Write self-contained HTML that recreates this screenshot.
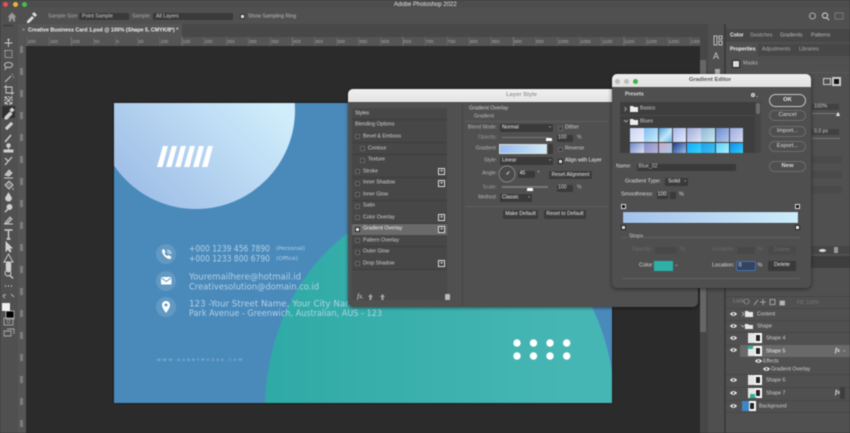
<!DOCTYPE html>
<html><head><meta charset="utf-8"><style>
html,body{margin:0;padding:0;background:#2b2b2b;overflow:hidden;width:850px;height:433px}
#r{position:relative;width:850px;height:433px;overflow:hidden;background:#2b2b2b;font-family:"Liberation Sans",sans-serif;filter:blur(.4px)}
.b{position:absolute}
.t{position:absolute;white-space:nowrap;line-height:1;transform:translateY(-50%);font-size:5.2px;color:#cfcfcf}
.r{transform:translate(-100%,-50%);color:#b5b5b5}
.w{color:#f2f2f2}
.d{color:#777}
.s{position:absolute;background:#3a3a3a;border-radius:1px}
.c{position:absolute;width:5px;height:5px;background:#3f3f3f;border:.5px solid #666;box-sizing:border-box}
.p{position:absolute;width:7px;height:7px;background:#3a3a3a;border:.5px solid #ddd;box-sizing:border-box;color:#eee;font-size:7px;line-height:5.5px;text-align:center}
.btn{position:absolute;background:#3c3c3c;color:#e6e6e6;font-size:5.2px;text-align:center;border-radius:1px}
.pill{position:absolute;border:1px solid #6c6c6c;border-radius:7px;box-sizing:border-box;color:#ddd;font-size:5.8px;text-align:center;left:769px;width:37px}
.row{position:absolute;left:352px;width:95px;height:11px;background:#474747;border-bottom:.5px solid #3c3c3c}
.sw{position:absolute;width:13.6px}
.lr{position:absolute;left:726px;width:124px;height:.5px;background:#474747}
.th{position:absolute;width:14px;height:10px;background:#fff;overflow:hidden}
.th:after{content:"";position:absolute;left:7px;top:1px;width:6px;height:8px;background:#222;border:1px solid #fff;box-sizing:border-box}
.th i{position:absolute;left:0;top:0;width:7px;height:10px;background:repeating-conic-gradient(#ccc 0 25%,#fff 0 50%) 0 0/3px 3px}
</style></head><body><div id="r">
<!-- chrome -->
<div class="b" style="left:0;top:0;width:850px;height:8px;background:#4d4d4d"></div>
<div class="b" style="left:0;top:8px;width:850px;height:16px;background:#505050"></div>
<div class="b" style="left:0;top:24px;width:726px;height:13px;background:#484848"></div>
<div class="b" style="left:18px;top:24px;width:164px;height:13px;background:#565656"></div>
<div class="b" style="left:18px;top:37px;width:682px;height:9px;background:#555"></div>
<div class="b" style="left:0;top:24px;width:18px;height:409px;background:#505050"></div>
<div class="b" style="left:18px;top:46px;width:8px;height:387px;background:#555"></div>
<div class="b" style="left:700px;top:37px;width:8px;height:396px;background:#474747"></div>
<div class="b" style="left:700px;top:60px;width:6px;height:272px;background:#666"></div>
<div class="b" style="left:708px;top:24px;width:18px;height:409px;background:#4f4f4f"></div>
<div class="b" style="left:724px;top:24px;width:2px;height:409px;background:#3c3c3c"></div>
<div class="b" style="left:726px;top:24px;width:124px;height:409px;background:#505050"></div>
<div class="b" style="left:726px;top:29px;width:124px;height:13px;background:#474747"></div>
<div class="b" style="left:726px;top:44px;width:124px;height:12px;background:#474747"></div>
<div class="b" style="left:726px;top:44px;width:32px;height:12px;background:#505050"></div>

<!-- traffic lights -->
<div class="b" style="left:3px;top:1.5px;width:5px;height:5px;border-radius:50%;background:#e8505b"></div>
<div class="b" style="left:12.5px;top:1.5px;width:5px;height:5px;border-radius:50%;background:#e8b43c"></div>
<div class="b" style="left:21.5px;top:1.5px;width:5px;height:5px;border-radius:50%;background:#4dbb50"></div>
<div class="t" style="left:394px;top:4.5px;font-size:6px;color:#e4e4e4">Adobe Photoshop 2022</div>

<!-- options -->
<svg class="b" style="left:0;top:8px" width="60" height="16"><path d="M7.500 9l4.500-4.500 4.500 4.500M9 9v4.500h2v-2.500h2v2.500h2V9" fill="#999"/><path d="M27 13l5-5 2 2-5 5-2 0zM32 6l2-2 3 3-2 2z" fill="#ddd"/></svg>
<div class="t" style="left:48px;top:16.5px;color:#aaa">Sample Size:</div>
<div class="s" style="left:79px;top:13px;width:50px;height:7px"></div>
<div class="t w" style="left:82px;top:16.5px;color:#ccc">Point Sample</div>
<div class="t" style="left:132px;top:16.5px;color:#aaa">Sample:</div>
<div class="s" style="left:153px;top:13px;width:80px;height:7px"></div>
<div class="t" style="left:156px;top:16.5px">All Layers</div>
<div class="c" style="left:240px;top:14px;background:#ddd;border:1.2px solid #333"></div>
<div class="t" style="left:248px;top:16.5px;color:#bbb">Show Sampling Ring</div>
<svg class="b" style="left:805px;top:10px" width="42" height="12"><circle cx="7.500" cy="6" r="3" fill="none" stroke="#aaa" stroke-width="1.100"/><circle cx="20" cy="5.500" r="2.600" fill="none" stroke="#ccc" stroke-width="1.100"/><path d="M22 8l2 2" stroke="#ccc" stroke-width="1.200"/><rect x="30" y="3" width="8" height="6" fill="none" stroke="#777"/></svg>

<!-- tab -->
<div class="t" style="left:22px;top:30.5px;color:#bbb">×</div>
<div class="t w" style="left:28px;top:30.5px;font-weight:bold;font-size:5.3px">Creative Business Card 1.psd @ 100% (Shape 5, CMYK/8*) *</div>

<!-- ruler -->
<div class="b" style="left:26px;top:37px;width:674px;height:9px;background:repeating-linear-gradient(90deg,#777 0 .6px,transparent .6px 22.1px) 1px 0"></div>
<div class="b" style="left:28px;top:38.5px;width:672px;display:flex;font-size:4.6px;color:#aaa;line-height:6px;overflow:hidden">
<span style="flex:0 0 22.1px">200</span><span style="flex:0 0 22.1px">150</span><span style="flex:0 0 22.1px">100</span><span style="flex:0 0 22.1px">50</span><span style="flex:0 0 22.1px">0</span><span style="flex:0 0 22.1px">50</span><span style="flex:0 0 22.1px">100</span><span style="flex:0 0 22.1px">150</span><span style="flex:0 0 22.1px">200</span><span style="flex:0 0 22.1px">250</span><span style="flex:0 0 22.1px">300</span><span style="flex:0 0 22.1px">350</span><span style="flex:0 0 22.1px">400</span><span style="flex:0 0 22.1px">450</span><span style="flex:0 0 22.1px">500</span><span style="flex:0 0 22.1px">550</span><span style="flex:0 0 22.1px">600</span><span style="flex:0 0 22.1px">650</span><span style="flex:0 0 22.1px">700</span><span style="flex:0 0 22.1px">750</span><span style="flex:0 0 22.1px">800</span><span style="flex:0 0 22.1px">850</span><span style="flex:0 0 22.1px">900</span><span style="flex:0 0 22.1px">950</span><span style="flex:0 0 22.1px">1000</span><span style="flex:0 0 22.1px">1050</span><span style="flex:0 0 22.1px">1100</span><span style="flex:0 0 22.1px">1150</span><span style="flex:0 0 22.1px">1200</span><span style="flex:0 0 22.1px">1250</span><span style="flex:0 0 22.1px">1300</span>
</div>
<div class="b" style="left:20px;top:46px;width:3px;height:387px;background:repeating-linear-gradient(180deg,#7c7c7c 0 7px,transparent 7px 22px)"></div>

<!-- toolbar -->
<div class="b" style="left:2px;top:106px;width:13px;height:12px;background:#2f2f2f"></div>
<svg class="b" style="left:0;top:30px" width="18" height="320" fill="none" stroke="#d0d0d0" stroke-width=".9">
<path d="M8.500 9v8M4.500 13h8M8.500 9l-1 1M8.500 9l1 1"/>
<rect x="5" y="20.500" width="7" height="7" stroke-dasharray="1.200 1"/>
<ellipse cx="8.500" cy="35" rx="4" ry="2.600"/><path d="M6 37l-1 3"/>
<path d="M5 52l6-6M12 44l.5 1M13 47l1 .3"/>
<path d="M6 55v8h8M4 57h8v8"/>
<rect x="5" y="67" width="7" height="7" stroke-dasharray="2 1"/><path d="M5 67l7 7M12 67l-7 7"/>
<path d="M5 87l5-5 2 2-5 5h-2zM10 80l2-2 2 2-2 2z" fill="#d0d0d0"/>
<path d="M5 98l6-6 2 2-6 6z" fill="#d0d0d0" stroke-width=".5"/>
<path d="M5 112l6-7" stroke-width="1.500"/>
<path d="M4 122h9v-2h-9zM8.500 120v-3" fill="#d0d0d0"/><circle cx="8.500" cy="115.500" r="1.800" fill="#d0d0d0"/>
<path d="M5 135l7-8M5 128l3 3" stroke-width="1.200"/>
<path d="M5 145l4-5 3 3-3 3zM4 148h9" fill="#bbb"/>
<path d="M5 155l4-4 4 4-4 4zM13 158v2" fill="#777"/>
<path d="M8.500 163l3 5a3 3 0 1 1-6 0z" fill="#d0d0d0"/>
<circle cx="9.500" cy="177" r="2.500" fill="#d0d0d0"/><path d="M8 179l-3 3" stroke-width="1.400"/>
<path d="M5 193l5-6 2 2-5 5zM4 194h9" fill="#888"/>
<path d="M4.500 200h8M8.500 200v9M6.500 209h4" stroke-width="1.400"/>
<path d="M6 212l0 9 2-2 2 3 1-1-2-3h3z" fill="#d0d0d0"/>
<path d="M8.500 224l4.500 8h-9z"/>
<path d="M6 242v-6h1v4-5h1.500v5-5H10v5-4h1v7l-1 2H7z" fill="#d0d0d0" transform="translate(0,-3)" stroke-width=".4"/>
<circle cx="8" cy="243" r="3"/><path d="M10 245.500l3 3" stroke-width="1.400"/>
<path d="M5 256h1M8 256h1M11 256h1" stroke-width="1.400"/>
<path d="M3 266a2 2 0 0 1 3-1M11 264l3 3M5 268l-2-2" stroke-width=".8"/>
<rect x="6" y="281" width="8" height="8" fill="#000" stroke="#eee" stroke-width=".6"/>
<rect x="2" y="273" width="8" height="8" fill="#f0f0f0" stroke="none"/>
<rect x="4" y="288" width="9" height="7" stroke="#aaa"/><circle cx="8.500" cy="291.500" r="1.500" stroke="#aaa" stroke-width=".6"/>
<path d="M4 301h7v5H4zM7 299h7v5" stroke="#aaa"/>
</svg>
<div class="b" style="left:3px;top:25px;width:10px;height:1px;background:#333"></div>

<!-- card -->
<div class="b" style="left:114px;top:103px;width:498px;height:300px;background:#4a8abb;box-shadow:0 0 2px #111"></div>
<div class="b" style="left:114px;top:103px;width:181px;height:107px;background:linear-gradient(225deg,#d0edfb 8%,#a0c0e8 85%);clip-path:circle(99px at 82px 7px)"></div>
<div class="b" style="left:114px;top:103px;width:498px;height:300px;background:linear-gradient(90deg,#2faaa6 30%,#46b6b4 90%);clip-path:ellipse(175px 208px at 326px 307px)"></div>
<svg class="b" style="left:0;top:0" width="850" height="433">
<g fill="#fff"><polygon points="157,167 162.500,167 168,146 163,146"/><polygon points="166,167 171.500,167 177,146 172,146"/><polygon points="175,167 180.500,167 186,146 181,146"/><polygon points="184,167 189.500,167 195,146 190,146"/><polygon points="193,167 198.500,167 204,146 199,146"/><polygon points="202,167 207.500,167 213,146 208,146"/></g>
<g fill="#fff" fill-opacity=".13"><circle cx="166" cy="254" r="10"/><circle cx="166" cy="281" r="10"/><circle cx="166" cy="307" r="10"/></g>
<path d="M162 250l2-1 1.500 3-1 1c.5 1.500 1.500 2.500 3 3l1-1 3 2-1 2c-4 .5-9-5-8.500-9z" fill="#fff"/><path d="M167 250a4 4 0 0 1 4 4M167 252a2 2 0 0 1 2 2" stroke="#fff" stroke-width=".8" fill="none"/>
<rect x="161" y="277" width="10.500" height="7.500" rx="1" fill="#fff"/><path d="M161.500 278l4.800 3.500 4.800-3.500" stroke="#4a8abb" stroke-width=".8" fill="none"/>
<path d="M166 301a4 4 0 0 1 4 4c0 3-4 8-4 8s-4-5-4-8a4 4 0 0 1 4-4z" fill="#fff"/><circle cx="166" cy="305" r="1.500" fill="#5b96c2"/>
<g font-family="'DejaVu Sans','Liberation Sans',sans-serif" fill="#bcd7ec" fill-opacity=".9">
<text x="189" y="251.500" font-size="9" textLength="81" lengthAdjust="spacingAndGlyphs">+000 1239 456 7890</text>
<text x="189" y="261.500" font-size="9" textLength="81" lengthAdjust="spacingAndGlyphs">+000 1233 800 6790</text>
<text x="276" y="250" font-size="5" textLength="29" lengthAdjust="spacingAndGlyphs">(Personal)</text>
<text x="276" y="260" font-size="5" textLength="22" lengthAdjust="spacingAndGlyphs">(Office)</text>
<text x="189" y="279.500" font-size="9" textLength="112" lengthAdjust="spacingAndGlyphs">Youremailhere@hotmail.id</text>
<text x="189" y="289.500" font-size="9" textLength="130" lengthAdjust="spacingAndGlyphs">Creativesolution@domain.co.id</text>
<text x="189" y="306.500" font-size="9" textLength="170" lengthAdjust="spacingAndGlyphs">123 -Your Street Name, Your City Name</text>
<text x="189" y="316" font-size="9" textLength="193" lengthAdjust="spacingAndGlyphs">Park Avenue - Greenwich, Australian, AUS - 123</text>
<text x="157" y="361" font-size="3.800" textLength="85" fill="#a9cbe4">WWW.DANNYMOZAK.COM</text>
</g>
<g fill="#fff"><circle cx="517" cy="343" r="3.700"/><circle cx="533.500" cy="343" r="3.700"/><circle cx="550" cy="343" r="3.700"/><circle cx="566.700" cy="343" r="3.700"/><circle cx="517" cy="356" r="3.700"/><circle cx="533.500" cy="356" r="3.700"/><circle cx="550" cy="356" r="3.700"/><circle cx="566.700" cy="356" r="3.700"/></g>
</svg>

<!-- right panels -->
<div class="t w" style="left:730px;top:35.500px;font-weight:bold">Color</div>
<div class="t" style="left:750px;top:35.500px;color:#aaa">Swatches</div>
<div class="t" style="left:780px;top:35.500px;color:#bbb">Gradients</div>
<div class="t" style="left:811px;top:35.500px;color:#bbb">Patterns</div>
<div class="t w" style="left:730px;top:50px;font-weight:bold">Properties</div>
<div class="t" style="left:762px;top:50px;color:#aaa">Adjustments</div>
<div class="t" style="left:799px;top:50px;color:#aaa">Libraries</div>
<div class="b" style="left:732px;top:60px;width:8px;height:8px;background:#ddd;border:1.500px solid #222;box-sizing:border-box;border-radius:1px"></div>
<div class="t" style="left:743px;top:64px;color:#bbb">Masks</div>
<div class="b" style="left:726px;top:72px;width:124px;height:1px;background:#5a5a5a"></div>
<div class="b" style="left:823px;top:78px;width:8px;height:7px;border:1px solid #ccc;box-sizing:border-box"></div>
<div class="b" style="left:832px;top:77px;width:9px;height:9px;background:#111;border:2px solid #ccc;box-sizing:border-box"></div>
<div class="s" style="left:812px;top:104px;width:27px;height:6px;background:#414141"></div>
<div class="t" style="left:814px;top:107px;color:#ccc">100%</div>
<div class="b" style="left:812px;top:113px;width:28px;height:1px;background:#777"></div>
<div class="b" style="left:836px;top:110px;border:2.500px solid transparent;border-bottom:4px solid #eee"></div>
<div class="s" style="left:812px;top:129px;width:27px;height:6px;background:#414141"></div>
<div class="t" style="left:814px;top:132px;color:#ccc">0,0 px</div>
<div class="b" style="left:812px;top:138px;width:28px;height:1px;background:#777"></div>
<div class="s" style="left:812px;top:156px;width:30px;height:7px;background:#4a4a4a"></div>
<div class="s" style="left:812px;top:171px;width:30px;height:7px;background:#4a4a4a"></div>
<div class="s" style="left:812px;top:186px;width:30px;height:7px;background:#4a4a4a"></div>
<div class="b" style="left:811px;top:246px;width:39px;height:8px;background:#464646"></div>
<div class="b" style="left:819px;top:249px;width:7px;height:3px;background:#ddd;border-radius:50%"></div>
<div class="b" style="left:834px;top:247px;width:4px;height:6px;background:#999"></div>
<div class="b" style="left:811px;top:256px;width:39px;height:12px;background:#3e3e3e"></div>

<!-- layers -->
<div class="b" style="left:726px;top:296px;width:124px;height:1px;background:#454545"></div>
<div class="t d" style="left:733px;top:301.500px;color:#8c8c8c">Lock:</div>
<svg class="b" style="left:742px;top:297px" width="90" height="10" fill="none" stroke="#b5b5b5" stroke-width=".8"><circle cx="4.500" cy="4.500" r="2.500" stroke-dasharray="1 .8"/><path d="M12 8l4-5M21 2v6M18 5h6"/><rect x="28" y="2.500" width="5" height="5"/><rect x="38" y="4" width="4.500" height="4" fill="#b5b5b5"/><text x="55" y="7" font-size="5" fill="#777" stroke="none" font-family="Liberation Sans">Fill: 100%</text></svg>
<div class="lr" style="top:308px"></div><div class="lr" style="top:320px"></div><div class="lr" style="top:332px"></div><div class="lr" style="top:345px"></div><div class="lr" style="top:374px"></div><div class="lr" style="top:387px"></div><div class="lr" style="top:400px"></div><div class="lr" style="top:412px"></div>
<div class="b" style="left:740px;top:345px;width:110px;height:12px;background:#696969"></div>
<svg class="b" style="left:726px;top:305px" width="124" height="110" fill="#e8e8e8">
<g id="e"><path d="M4 9c2-2.500 5-2.500 7 0-2 2.500-5 2.500-7 0z"/><circle cx="7.500" cy="9" r="1" fill="#444"/></g>
<use href="#e" y="12"/><use href="#e" y="24"/><use href="#e" y="36"/><use href="#e" y="66"/><use href="#e" y="79"/><use href="#e" y="92"/>
<use href="#e" x="25" y="47" /><use href="#e" x="33" y="55"/>
<path d="M16 7l2 2-2 2" fill="none" stroke="#ccc" stroke-width=".7"/><path d="M15 20l2 2 2-2" fill="none" stroke="#ccc" stroke-width=".7"/>
<path d="M19 6h3l1 1h4v5h-8zM19 19h3l1 1h4v4h-8z"/>
</svg>
<div class="t" style="left:757px;top:314.500px">Content</div>
<div class="t" style="left:757px;top:326.500px">Shape</div>
<div class="th" style="left:748px;top:333px"><i></i></div><div class="t" style="left:766px;top:338.500px">Shape 4</div>
<div class="th" style="left:748px;top:346px"><i></i><i style="width:5px;height:3px;background:#2dae99;background-image:none"></i></div><div class="t w" style="left:766px;top:351.500px">Shape 5</div>
<div class="t w" style="left:835px;top:351px;font-style:italic;font-family:'Liberation Serif',serif;font-size:6px;font-weight:bold">fx</div>
<div class="t" style="left:842px;top:351px">⌄</div>
<div class="t" style="left:763px;top:361.500px">Effects</div>
<div class="t" style="left:771px;top:369.500px">Gradient Overlay</div>
<div class="th" style="left:748px;top:375px"><i></i></div><div class="t" style="left:766px;top:380.500px">Shape 6</div>
<div class="th" style="left:748px;top:388px"><i></i><i style="left:2px;top:6px;width:6px;height:4px;background:#2dae99;background-image:none"></i></div><div class="t" style="left:766px;top:393.500px">Shape 7</div>
<div class="t w" style="left:835px;top:393px;font-style:italic;font-family:'Liberation Serif',serif;font-size:6px;font-weight:bold">fx</div>
<div class="b" style="left:840px;top:387px;width:5px;height:12px;background:#3d3d3d"></div>
<div class="th" style="left:742px;top:401px"><i style="background:#3f87c4"></i></div><div class="t" style="left:759px;top:406.500px">Background</div>
<svg class="b" style="left:712px;top:33px" width="12" height="48" fill="none" stroke="#bbb"><path d="M2 3h3v9H2zM7 3h3v3H7zM7 8h3v4H7z"/><text x="1" y="26" font-size="9" fill="#ccc" stroke="none" font-family="Liberation Sans">A</text><rect x="3" y="36" width="5" height="5" fill="#aaa" stroke="none"/></svg>

<!-- Layer Style dialog -->
<div class="b" style="left:348px;top:89px;width:350px;height:218px;background:#505050;border-radius:5px;box-shadow:0 1px 3px rgba(0,0,0,.5);overflow:hidden">
  <div class="b" style="left:0;top:0;width:100%;height:13px;background:linear-gradient(#f0f0f0,#e4e4e4)"></div>
</div>
<div class="t" style="left:506px;top:95.500px;color:#999;font-weight:bold;font-size:5.800px">Layer Style</div>
<div class="b" style="left:352px;top:108px;width:95px;height:192px;background:#4a4a4a"></div>
<div class="b" style="left:462px;top:103px;width:.7px;height:203px;background:#444"></div>
<div class="row" style="top:108px"></div><div class="row" style="top:119.500px"></div><div class="row" style="top:131px"></div><div class="row" style="top:143px"></div><div class="row" style="top:154.500px"></div><div class="row" style="top:166px"></div><div class="row" style="top:177.500px"></div><div class="row" style="top:189px"></div><div class="row" style="top:200.500px"></div><div class="row" style="top:212px"></div>
<div class="row" style="top:223.500px;background:#6a6a6a"></div>
<div class="row" style="top:235px"></div><div class="row" style="top:246.500px"></div><div class="row" style="top:258px"></div>
<div class="t w" style="left:355px;top:113.500px;color:#ddd">Styles</div>
<div class="t" style="left:355px;top:125px">Blending Options</div>
<div class="c" style="left:355px;top:134px"></div><div class="t" style="left:363px;top:137px">Bevel &amp; Emboss</div>
<div class="c" style="left:359.500px;top:146px"></div><div class="t" style="left:368px;top:148.500px">Contour</div>
<div class="c" style="left:359.500px;top:157.500px"></div><div class="t" style="left:368px;top:160px">Texture</div>
<div class="c" style="left:355px;top:169px"></div><div class="t" style="left:363px;top:171.500px">Stroke</div><div class="p" style="left:438px;top:168px">+</div>
<div class="c" style="left:355px;top:180.500px"></div><div class="t" style="left:363px;top:183px">Inner Shadow</div><div class="p" style="left:438px;top:179.500px">+</div>
<div class="c" style="left:355px;top:192px"></div><div class="t" style="left:363px;top:194.500px">Inner Glow</div>
<div class="c" style="left:355px;top:203.500px"></div><div class="t" style="left:363px;top:206px">Satin</div>
<div class="c" style="left:355px;top:215px"></div><div class="t" style="left:363px;top:217.500px">Color Overlay</div><div class="p" style="left:438px;top:214px">+</div>
<div class="c" style="left:355px;top:226.500px;background:#eee;border:1.200px solid #222"></div><div class="t w" style="left:363px;top:229px">Gradient Overlay</div><div class="p" style="left:438px;top:225.500px">+</div>
<div class="c" style="left:355px;top:238px"></div><div class="t" style="left:363px;top:240.500px">Pattern Overlay</div>
<div class="c" style="left:355px;top:249.500px"></div><div class="t" style="left:363px;top:252px">Outer Glow</div>
<div class="c" style="left:355px;top:261px"></div><div class="t" style="left:363px;top:263.500px">Drop Shadow</div><div class="p" style="left:438px;top:260px">+</div>
<div class="t" style="left:357px;top:297px;font-family:'Liberation Serif',serif;font-style:italic;font-size:7px;color:#ddd">fx.</div>
<svg class="b" style="left:366px;top:293px" width="20" height="8" fill="#a5a5a5"><path d="M4.500 1l2.500 3H5.500v3h-2V4H2zM16.500 1l2.500 3h-1.500v3h-2V4H14z"/></svg>
<div class="b" style="left:445px;top:294px;width:4.500px;height:6px;background:#bbb;border-radius:1px"></div>

<div class="t" style="left:469px;top:109px">Gradient Overlay</div>
<div class="t" style="left:474px;top:117px;color:#bbb">Gradient</div>
<div class="b" style="left:465px;top:121px;width:143px;height:.6px;background:#5e5e5e"></div>
<div class="b" style="left:465px;top:206px;width:143px;height:.6px;background:#5e5e5e"></div>
<div class="t r" style="left:497px;top:128px">Blend Mode:</div>
<div class="s" style="left:500px;top:124px;width:53px;height:8px"></div><div class="t" style="left:502px;top:128px;color:#eee">Normal</div><div class="t" style="left:548px;top:127px;font-size:5px">⌄</div>
<div class="c" style="left:558px;top:126px"></div><div class="t" style="left:565px;top:128px">Dither</div>
<div class="t r" style="left:497px;top:138px;color:#999">Opacity:</div>
<div class="b" style="left:502px;top:136.500px;width:46px;height:1.500px;background:#777"></div>
<div class="b" style="left:545.500px;top:138px;width:6px;height:3px;background:#fff;border-radius:1px 1px 0 0"></div>
<div class="s" style="left:557px;top:134.500px;width:16px;height:7px"></div><div class="t" style="left:558px;top:138px;color:#ddd">100</div><div class="t" style="left:577px;top:138px;color:#bbb">%</div>
<div class="t r" style="left:497px;top:149px">Gradient:</div>
<div class="b" style="left:499px;top:144px;width:48px;height:10px;background:linear-gradient(90deg,#97bcee,#cfe9f8);border:.7px solid #ddd;box-sizing:border-box"></div>
<div class="s" style="left:548px;top:144px;width:5px;height:10px"></div>
<div class="c" style="left:558px;top:146.500px"></div><div class="t" style="left:565px;top:149px">Reverse</div>
<div class="t r" style="left:497px;top:161px">Style:</div>
<div class="s" style="left:500px;top:157px;width:53px;height:8px"></div><div class="t" style="left:502px;top:161px;color:#eee">Linear</div><div class="t" style="left:548px;top:160px;font-size:5px">⌄</div>
<div class="c" style="left:558px;top:158.500px;background:#ddd;border:1.200px solid #222"></div><div class="t w" style="left:565px;top:161px">Align with Layer</div>
<div class="t r" style="left:497px;top:174px">Angle:</div>
<svg class="b" style="left:498px;top:165px" width="18" height="18"><circle cx="9" cy="9" r="8" fill="#4a4a4a" stroke="#999" stroke-width=".7"/><path d="M9 9l2.500-2.500" stroke="#eee" stroke-width=".7"/><circle cx="9" cy="9" r=".6" fill="#eee"/></svg>
<div class="s" style="left:518px;top:170.500px;width:17px;height:7px"></div><div class="t" style="left:519.500px;top:174px;color:#eee">45</div><div class="t" style="left:537.500px;top:174px">°</div>
<div class="btn" style="left:549px;top:171px;width:43px;height:8px;line-height:8px">Reset Alignment</div>
<div class="t r" style="left:497px;top:188px;color:#999">Scale:</div>
<div class="b" style="left:502px;top:186px;width:46px;height:1.500px;background:#777"></div>
<div class="b" style="left:527px;top:187.500px;width:6px;height:3px;background:#fff;border-radius:1px 1px 0 0"></div>
<div class="s" style="left:557px;top:184.500px;width:16px;height:7px"></div><div class="t" style="left:558px;top:188px;color:#ddd">100</div><div class="t" style="left:577px;top:188px;color:#bbb">%</div>
<div class="t r" style="left:497px;top:198px">Method:</div>
<div class="s" style="left:500px;top:194px;width:32px;height:8px"></div><div class="t" style="left:502px;top:198px;color:#eee">Classic</div><div class="t" style="left:527px;top:197px;font-size:5px">⌄</div>
<div class="btn" style="left:503px;top:210px;width:35px;height:8.500px;line-height:8.500px">Make Default</div>
<div class="btn" style="left:544px;top:210px;width:42px;height:8.500px;line-height:8.500px">Reset to Default</div>

<!-- Gradient Editor -->
<div class="b" style="left:612px;top:74px;width:199px;height:214px;background:#4f4f4f;border-radius:5px;box-shadow:0 1px 4px rgba(0,0,0,.5);overflow:hidden">
  <div class="b" style="left:0;top:0;width:100%;height:13px;background:linear-gradient(#eee,#e0e0e0)"></div>
</div>
<div class="b" style="left:615px;top:78.500px;width:5px;height:5px;border-radius:50%;background:#bbb"></div>
<div class="b" style="left:624px;top:78.500px;width:5px;height:5px;border-radius:50%;background:#bbb"></div>
<div class="b" style="left:633px;top:78.500px;width:5px;height:5px;border-radius:50%;background:#3cb44a"></div>
<div class="t" style="left:689px;top:80.500px;color:#555;font-weight:bold;font-size:5.800px">Gradient Editor</div>
<div class="t" style="left:625px;top:94.500px;font-weight:bold;color:#ddd">Presets</div>
<svg class="b" style="left:750px;top:92px" width="10" height="6"><circle cx="3" cy="3" r="2" fill="#ddd"/><circle cx="3" cy="3" r=".7" fill="#4f4f4f"/><circle cx="7" cy="4.500" r=".5" fill="#ddd"/></svg>
<div class="b" style="left:620px;top:102px;width:141px;height:51px;background:#3e3e3e"></div>
<div class="b" style="left:620px;top:115px;width:141px;height:.6px;background:#4a4a4a"></div>
<div class="b" style="left:755px;top:102px;width:6px;height:51px;background:#464646"></div>
<div class="b" style="left:755.500px;top:103px;width:4px;height:11px;background:#6d6d6d;border-radius:2px"></div>
<svg class="b" style="left:622px;top:105px" width="28" height="20" fill="#eee"><path d="M2.500 2l2 2-2 2M2 15l2 2 2-2" fill="none" stroke="#ccc" stroke-width=".7"/><path d="M8 1h3l1 1h4v5H8zM8 14h3l1 1h4v5H8z"/></svg>
<div class="t" style="left:640px;top:108.500px;color:#ccc">Basics</div>
<div class="t" style="left:640px;top:121.500px;color:#ccc">Blues</div>
<div class="b" style="left:630px;top:128px;width:114px;height:25px;overflow:hidden">
<div class="sw" style="left:0;top:0;height:14px;background:linear-gradient(135deg,#c8d4f4,#eef0fc)"></div>
<div class="sw" style="left:14.250px;top:0;height:14px;background:linear-gradient(135deg,#7dbcf4,#c9f0fb)"></div>
<div class="sw" style="left:28.500px;top:0;height:14px;background:linear-gradient(135deg,#4e9fe0,#c3e6f8 55%,#6fb8e8)"></div>
<div class="sw" style="left:42.750px;top:0;height:14px;background:linear-gradient(135deg,#a9b8ee,#e3e9fa)"></div>
<div class="sw" style="left:57px;top:0;height:14px;background:linear-gradient(135deg,#9ea9da,#dfe6f2)"></div>
<div class="sw" style="left:71.250px;top:0;height:14px;background:linear-gradient(135deg,#8fb3d8,#c9ecec)"></div>
<div class="sw" style="left:85.500px;top:0;height:14px;background:linear-gradient(135deg,#6a8cd0,#b5c8ec)"></div>
<div class="sw" style="left:99.750px;top:0;height:14px;background:linear-gradient(135deg,#9aaee0,#d4d8ee)"></div>
<div class="sw" style="left:0;top:15px;height:10px;background:linear-gradient(135deg,#6c86c8,#dfe4f2)"></div>
<div class="sw" style="left:14.250px;top:15px;height:10px;background:linear-gradient(135deg,#8a8cc4,#b5b8dc)"></div>
<div class="sw" style="left:28.500px;top:15px;height:10px;background:linear-gradient(135deg,#c8a8c8,#a8cce8)"></div>
<div class="sw" style="left:42.750px;top:15px;height:10px;background:linear-gradient(135deg,#1c3c8c,#9cc0ea)"></div>
<div class="sw" style="left:57px;top:15px;height:10px;background:linear-gradient(135deg,#16a8f4,#34d4fa)"></div>
<div class="sw" style="left:71.250px;top:15px;height:10px;background:linear-gradient(135deg,#1ea0e8,#3cc0f0)"></div>
<div class="sw" style="left:85.500px;top:15px;height:10px;background:linear-gradient(135deg,#5cd0fa,#a8f0fc)"></div>
<div class="sw" style="left:99.750px;top:15px;height:10px;background:linear-gradient(135deg,#0e8cf0,#30ccf8)"></div>
</div>
<div class="pill" style="top:94px;height:12.500px;line-height:10.500px;border-color:#c5c5c5;color:#eee;font-weight:bold">OK</div>
<div class="pill" style="top:110px;height:11px;line-height:9px">Cancel</div>
<div class="pill" style="top:126px;height:11px;line-height:9px">Import...</div>
<div class="pill" style="top:141px;height:11px;line-height:9px">Export...</div>
<div class="pill" style="top:161px;height:11px;line-height:9px;font-weight:bold">New</div>
<div class="t" style="left:616px;top:167px;color:#ddd">Name:</div>
<div class="s" style="left:637px;top:164px;width:99px;height:6.500px"></div><div class="t" style="left:638.500px;top:167.300px;color:#ccc">Blue_02</div>
<div class="t" style="left:625px;top:181.500px;color:#ddd;font-size:5.500px">Gradient Type:</div>
<div class="s" style="left:665px;top:178px;width:23px;height:7.500px"></div><div class="t" style="left:668px;top:181.500px;color:#eee;font-size:5.500px">Solid</div><div class="t" style="left:683px;top:181px;font-size:5px">⌄</div>
<div class="t" style="left:621px;top:195px;color:#ddd;font-size:5.500px">Smoothness:</div>
<div class="s" style="left:657px;top:191.500px;width:11px;height:7px"></div><div class="t" style="left:657.500px;top:195px;color:#eee;font-size:5.500px">100</div>
<div class="s" style="left:670px;top:191.500px;width:6px;height:7px"></div><div class="t" style="left:679px;top:195px;color:#ddd;font-size:5.500px">%</div>
<div class="b" style="left:621px;top:203.500px;width:5px;height:5px;background:#111;border:1px solid #ddd;box-sizing:border-box"></div>
<div class="b" style="left:795px;top:203.500px;width:5px;height:5px;background:#111;border:1px solid #ddd;box-sizing:border-box"></div>
<div class="b" style="left:623px;top:212px;width:175px;height:11px;background:linear-gradient(90deg,#a3c2ea,#cdecf9);box-shadow:0 0 0 .5px #333"></div>
<div class="b" style="left:621px;top:225px;width:4.500px;height:5px;background:#ddd;border:.7px solid #222;box-sizing:border-box"></div>
<div class="b" style="left:795px;top:225px;width:4.500px;height:5px;background:#eee;border:.7px solid #222;box-sizing:border-box"></div>
<div class="t" style="left:629px;top:237px;color:#ccc;font-size:5.500px">Stops</div>
<div class="b" style="left:622px;top:237px;width:5px;height:.6px;background:#626262"></div>
<div class="b" style="left:642px;top:237px;width:158px;height:.6px;background:#626262"></div>
<div class="b" style="left:622px;top:278px;width:178px;height:.6px;background:#626262"></div>
<div class="t" style="left:632px;top:250px;color:#6d6d6d;font-size:5.500px">Opacity:</div>
<div class="s" style="left:655px;top:246.500px;width:22px;height:7px;background:#484848"></div><div class="t" style="left:680px;top:250px;color:#6d6d6d;font-size:5.500px">%</div>
<div class="t" style="left:712px;top:250px;color:#6d6d6d;font-size:5.500px">Location:</div>
<div class="s" style="left:737px;top:246.500px;width:18px;height:7px;background:#484848"></div><div class="t" style="left:757.500px;top:250px;color:#6d6d6d;font-size:5.500px">%</div>
<div class="btn" style="left:768px;top:246px;width:28px;height:9px;line-height:9px;background:#4a4a4a;color:#6d6d6d;font-size:5.500px">Delete</div>
<div class="t" style="left:639px;top:265.500px;color:#ddd;font-size:5.500px">Color:</div>
<div class="b" style="left:654px;top:261px;width:19px;height:9.500px;background:#2eb0a8"></div><div class="t" style="left:675px;top:265.500px;font-size:5px">–</div>
<div class="t" style="left:712px;top:265.500px;color:#ddd;font-size:5.500px">Location:</div>
<div class="b" style="left:737px;top:262px;width:18px;height:7.500px;background:#34445c;box-shadow:0 0 0 1px #3f6fb5;border-radius:1px"></div><div class="t w" style="left:738.500px;top:265.800px;font-size:5.500px">0</div><div class="t" style="left:757.500px;top:265.500px;color:#ddd;font-size:5.500px">%</div>
<div class="btn" style="left:768px;top:261px;width:28px;height:9.500px;line-height:9.500px;background:#3a3a3a;color:#eee;font-size:5.500px">Delete</div>
</div></body></html>
